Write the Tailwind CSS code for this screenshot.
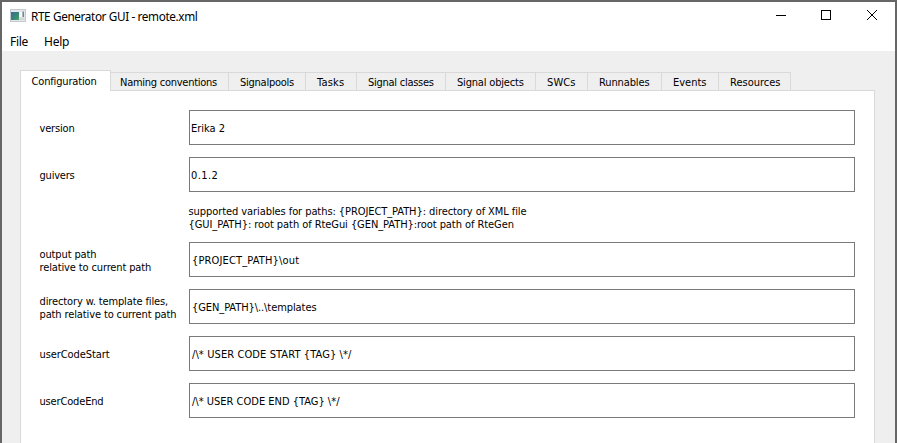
<!DOCTYPE html>
<html lang="en">
<head>
<meta charset="utf-8">
<title>RTE Generator GUI</title>
<script src="https://cdn.jsdelivr.net/npm/@tailwindcss/browser@4"></script>
</head>
<body class="w-[897px] h-[443px] overflow-hidden bg-[#666666] text-black">
<div class="w-full h-full border-2 border-b-0 border-[#666666] bg-[#efefef] flex flex-col font-['DejaVu_Sans_Condensed','DejaVu_Sans',sans-serif] text-[11px] leading-[13px] whitespace-pre">
  <header class="h-[28px] shrink-0 bg-white flex items-center pl-2 font-['Noto_Sans','Open_Sans',sans-serif] text-[11.75px]">
    <svg class="w-4 h-[13px] mr-[5px] -mt-[2px] shrink-0" viewBox="0 0 16 13">
      <defs>
        <linearGradient id="screen" x1="0" y1="0" x2="1" y2="1"><stop offset="0" stop-color="#3c6c96"/><stop offset=".5" stop-color="#39817c"/><stop offset="1" stop-color="#45a45a"/></linearGradient>
      </defs>
      <rect width="16" height="13" fill="#c3cacf"/>
      <rect x="1" y="1" width="14" height="11" fill="#e3e7e9"/>
      <rect x="1" y="3" width="8" height="8" fill="url(#screen)"/>
      <rect x="9.5" y="3" width="2.5" height="5" fill="#f7f8f8"/>
      <rect x="12.5" y="2.5" width="1.5" height="5.5" fill="#70898f"/>
      <rect x="9.5" y="8.5" width="5" height="2.5" fill="#d2d6d8"/>
    </svg>
    <span class="tracking-[-0.37px]">RTE Generator GUI - remote.xml</span>
    <svg class="ml-auto mr-[17px] w-[104px] h-[12px] -mt-[2px] shrink-0" viewBox="0 0 104 12" fill="none" stroke="#000" shape-rendering="crispEdges">
      <path d="M2 6.5H12M47.5 1.5h9v9h-9z"/>
      <path d="M93 1L103 11M103 1L93 11" shape-rendering="auto"/>
    </svg>
  </header>
  <nav class="h-[21px] shrink-0 bg-white flex items-center pl-2 pt-px gap-4 font-['Noto_Sans','Open_Sans',sans-serif] text-[12px]">
    <span class="tracking-[-0.28px]">File</span><span class="tracking-[-0.25px]">Help</span>
  </nav>
  <main class="flex-1 min-h-0 pt-[19px] pl-[18px] pr-5 flex flex-col">
    <div class="flex items-end h-[20px] shrink-0">
      <div class="relative z-10 w-[91px] h-[21px] -mb-px bg-white border border-b-0 border-[#d9d9d9] pl-[10.5px] pt-[4px] tracking-[-0.16px]">Configuration</div>
      <div class="w-[118px] h-[18px] border-t border-r border-[#d9d9d9] pl-[9px] pt-[3px] tracking-[-0.26px]">Naming conventions</div>
      <div class="w-[77px] h-[18px] border-t border-r border-[#d9d9d9] pl-[11px] pt-[3px] tracking-[-0.25px]">Signalpools</div>
      <div class="w-[51px] h-[18px] border-t border-r border-[#d9d9d9] pl-[11px] pt-[3px] tracking-[0.2px]">Tasks</div>
      <div class="w-[89px] h-[18px] border-t border-r border-[#d9d9d9] pl-[11px] pt-[3px] tracking-[-0.26px]">Signal classes</div>
      <div class="w-[90px] h-[18px] border-t border-r border-[#d9d9d9] pl-[11px] pt-[3px] tracking-[-0.18px]">Signal objects</div>
      <div class="w-[52px] h-[18px] border-t border-r border-[#d9d9d9] pl-[11px] pt-[3px] tracking-[0.1px]">SWCs</div>
      <div class="w-[74px] h-[18px] border-t border-r border-[#d9d9d9] pl-[11px] pt-[3px] tracking-[-0.12px]">Runnables</div>
      <div class="w-[57px] h-[18px] border-t border-r border-[#d9d9d9] pl-[11px] pt-[3px]">Events</div>
      <div class="w-[72px] h-[18px] border-t border-r border-[#d9d9d9] pl-[11px] pt-[3px]">Resources</div>
    </div>
    <section class="flex-1 min-h-0 w-[855px] bg-white border border-b-0 border-[#d9d9d9] pt-[19px] pl-[18px] pr-[19px] flex flex-col">
      <div class="grid grid-cols-[150px_666px] gap-y-3 items-center">
        <label class="tracking-[-0.18px] pl-[0.5px] pt-[2px]">version</label>
        <div class="h-[35px] border border-[#7a7a7a] pl-px pt-[2px] flex items-center">Erika 2</div>
        <label class="tracking-[-0.21px] pl-[0.5px] pt-[2px]">guivers</label>
        <div class="h-[35px] border border-[#7a7a7a] pl-px pt-[2px] flex items-center tracking-[0.4px]">0.1.2</div>
        <div class="col-start-2 h-[26px] pt-px -ml-[0.5px]"><p class="tracking-[-0.075px]">supported variables for paths: {PROJECT_PATH}: directory of XML file</p><p class="tracking-[-0.065px]">{GUI_PATH}: root path of RteGui {GEN_PATH}:root path of RteGen</p></div>
        <label class="pl-[0.5px] pt-[2px]"><span class="block tracking-[-0.12px]">output path</span><span class="block tracking-[-0.13px]">relative to current path</span></label>
        <div class="h-[35px] border border-[#7a7a7a] pl-[2px] pt-[2px] flex items-center tracking-[0.15px]">{PROJECT_PATH}\out</div>
        <label class="pl-[0.5px] pt-[2px]"><span class="block tracking-[-0.12px]">directory w. template files,</span><span class="block tracking-[-0.12px]">path relative to current path</span></label>
        <div class="h-[35px] border border-[#7a7a7a] pl-[2px] pt-[2px] flex items-center tracking-[-0.08px]">{GEN_PATH}\..\templates</div>
        <label class="tracking-[-0.085px] pl-[0.5px] pt-[2px]">userCodeStart</label>
        <div class="h-[35px] border border-[#7a7a7a] pl-[2px] pt-[2px] flex items-center tracking-[0.1px]">/\* USER CODE START {TAG} \*/</div>
        <label class="tracking-[-0.16px] pl-[0.5px] pt-[2px]">userCodeEnd</label>
        <div class="h-[35px] border border-[#7a7a7a] pl-[2px] pt-[2px] flex items-center">/\* USER CODE END {TAG} \*/</div>
      </div>
    </section>
  </main>
</div>
</body>
</html>
